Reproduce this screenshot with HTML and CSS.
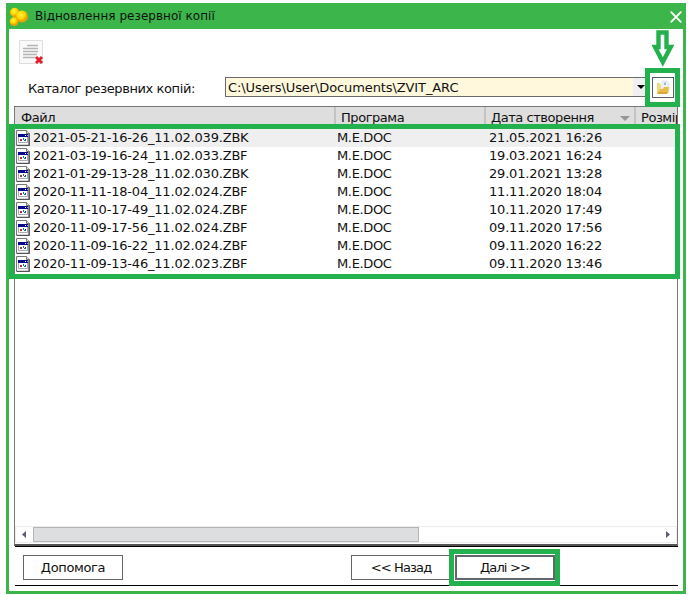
FILE: index.html
```html
<!DOCTYPE html>
<html lang="uk">
<head>
<meta charset="utf-8">
<title>Відновлення резервної копії</title>
<link rel="stylesheet" href="styles.css">
</head>
<body>
<svg width="0" height="0" class="defs">
  <symbol id="file" viewBox="0 0 14 16">
    <path d="M.5.5h10l3 3v12H.5z" fill="#fff" stroke="#777"/>
    <path d="M13 3v12.5H1" fill="none" stroke="#555" stroke-width="1.3"/>
    <path d="M10.5.5v3h3" fill="#ddd" stroke="#777"/>
    <path d="M2.5 4.5h9v8h-9z" fill="#fff" stroke="#a9a9b5"/>
    <path d="M2 4h10v3H2z" fill="#08088c"/>
    <path d="M9 5h1v1H9zM11 5h.6v1H11z" fill="#fff"/>
    <path d="M4 9h2v2H4z" fill="#a33"/><path d="M7 8h1v2H7zM8 10h2v1H8z" fill="#087c80"/><path d="M9 9h1v1H9z" fill="#22a"/>
  </symbol>
</svg>
<main class="window">
  <header class="title">
    <svg class="logo" width="20" height="20" viewBox="0 0 20 20">
      <defs><radialGradient id="g" cx=".4" cy=".35"><stop offset="0" stop-color="#fff23a"/><stop offset=".65" stop-color="#ffd800"/><stop offset="1" stop-color="#eba500"/></radialGradient></defs>
      <circle cx="5.8" cy="5.6" r="4.8" fill="url(#g)"/><circle cx="5.2" cy="14.6" r="4.4" fill="url(#g)"/><circle cx="13" cy="9.5" r="6" fill="url(#g)"/>
    </svg>
    <h1>Відновлення резервної копії</h1>
    <svg class="close" width="12" height="12" viewBox="0 0 12 12"><path d="M.7.7l10.6 10.6M11.3.7L.7 11.3" stroke="#fff" stroke-width="1.9"/></svg>
  </header>
  <div class="toolbar">
    <svg width="25" height="25" viewBox="0 0 25 25">
      <path d="M.5.5h23v23H.5z" fill="#fafafa" stroke="#dedede"/>
      <path d="M8 5.5h11M4 8.5h15M4 11.5h15M4 14.5h14M4 17.5h12" stroke="#b5b5b7" stroke-width="1.7"/>
      <path d="M17 17l6 6M23 17l-6 6" stroke="#df202c" stroke-width="2.9"/>
    </svg>
  </div>
  <div class="path">
    <label>Каталог резервних копій:</label>
    <div class="combo"><span>C:\Users\User\Documents\ZVIT_ARC</span><i><svg width="8" height="4" viewBox="0 0 8 4"><path d="M0 0h8L4 4z"/></svg></i></div>
    <div class="browse"><svg width="14" height="15" viewBox="0 0 14 15"><path d="M6 1h5l2 2v9H6z" fill="#edf2f7" stroke="#d4dce4" stroke-width=".6"/><path d="M8 5V3l2-1v3" fill="#9db8d2"/><path d="M1 3h3l1 2v9H1z" fill="#f0d886"/><path d="M1 13l3-4h3l1-2h5l-1 6z" fill="#e9bd43"/><path d="M1 14h10l1-2H3z" fill="#d8a63c"/></svg></div>
  </div>
  <section class="list">
    <div class="head"><span>Файл</span><span>Програма</span><span class="date">Дата створення<svg width="10" height="5" viewBox="0 0 10 5"><path d="M0 0h10L5 5z" fill="#969696"/></svg></span><span>Розмір</span></div>
    <div class="rows">
      <div class="row"><svg><use href="#file"/></svg><span>2021-05-21-16-26_11.02.039.ZBK</span><span>M.E.DOC</span><span>21.05.2021 16:26</span></div>
      <div class="row"><svg><use href="#file"/></svg><span>2021-03-19-16-24_11.02.033.ZBF</span><span>M.E.DOC</span><span>19.03.2021 16:24</span></div>
      <div class="row"><svg><use href="#file"/></svg><span>2021-01-29-13-28_11.02.030.ZBK</span><span>M.E.DOC</span><span>29.01.2021 13:28</span></div>
      <div class="row"><svg><use href="#file"/></svg><span>2020-11-11-18-04_11.02.024.ZBF</span><span>M.E.DOC</span><span>11.11.2020 18:04</span></div>
      <div class="row"><svg><use href="#file"/></svg><span>2020-11-10-17-49_11.02.024.ZBF</span><span>M.E.DOC</span><span>10.11.2020 17:49</span></div>
      <div class="row"><svg><use href="#file"/></svg><span>2020-11-09-17-56_11.02.024.ZBF</span><span>M.E.DOC</span><span>09.11.2020 17:56</span></div>
      <div class="row"><svg><use href="#file"/></svg><span>2020-11-09-16-22_11.02.024.ZBF</span><span>M.E.DOC</span><span>09.11.2020 16:22</span></div>
      <div class="row"><svg><use href="#file"/></svg><span>2020-11-09-13-46_11.02.023.ZBF</span><span>M.E.DOC</span><span>09.11.2020 13:46</span></div>
    </div>
    <div class="scroll">
      <svg width="4" height="7" viewBox="0 0 4 7"><path d="M4 0v7L0 3.5z" fill="#5b5b74"/></svg>
      <div class="thumb"></div>
      <svg width="4" height="7" viewBox="0 0 4 7"><path d="M0 0v7l4-3.5z" fill="#5b5b74"/></svg>
    </div>
  </section>
  <footer class="actions">
    <button>Допомога</button>
    <button class="back">&lt;&lt; Назад</button>
    <button class="next">Далі &gt;&gt;</button>
  </footer>
</main>
<div class="mark mark-list"></div>
<div class="mark mark-browse"></div>
<div class="mark mark-next"></div>
<svg class="arrow" width="22" height="37" viewBox="0 0 22 37"><path d="M6.5 2.5h8V17h4.2L10.8 32 3 17h3.5z" fill="#fff" stroke="#22b14c" stroke-width="4.4"/></svg>
</body>
</html>
```
FILE: styles.css
```css
* { box-sizing: border-box; }
body { margin: 0; padding: 3px 2px 0 6px; width: 688px; height: 595px; overflow: hidden; background: #fff; color: #111; font: 13px "DejaVu Sans", sans-serif; white-space: nowrap; }
.defs { position: absolute; }
svg { display: block; flex: none; }
.window { width: 680px; height: 591px; border: 3px solid #3cb54a; border-top: 0; background: #fff; display: flex; flex-direction: column; }
.title { height: 26px; margin: 0 -3px; flex: none; background: #3cb54a; display: flex; align-items: center; padding: 0 4px 0 3px; }
.title h1 { font-size: 12px; font-weight: 400; margin: 0 0 1px 6px; flex: 1; letter-spacing: .04px; }
.logo { margin-top: 2px; }
.close { margin-top: 2px; }
.toolbar { height: 48px; flex: none; padding: 11px 0 0 10px; }
.path { height: 29px; flex: none; display: flex; }
.path label { width: 216px; padding-left: 19px; line-height: 23px; letter-spacing: -.4px; }
.combo { width: 424px; height: 20px; border: 1px solid #6b6b6b; background: #fff8dc; display: flex; justify-content: space-between; line-height: 19px; padding-left: 2px; letter-spacing: -.1px; }
.combo i { width: 15px; background: #f0f0f2; display: flex; align-items: center; justify-content: center; }
.browse { width: 22px; height: 21px; margin-left: 3px; border: 1px solid #5c5c66; background: #fff; padding: 2px 0 0 3px; }
.list { width: 664px; height: 440px; flex: none; margin-left: 5px; border: 1px solid #777; border-bottom: 2px solid #555; display: flex; flex-direction: column; overflow: hidden; }
.head { display: grid; grid-template-columns: 321px 150px 150px 41px; height: 22px; background: #dedede; line-height: 22px; letter-spacing: -.45px; }
.head span { padding-left: 5px; border-right: 2px solid #c3c3c3; overflow: hidden; }
.head span:first-child { padding-left: 6px; }
.head span:last-child { border: 0; }
.head .date { display: flex; justify-content: space-between; align-items: center; padding-right: 4px; }
.rows { flex: 1; }
.row { display: grid; grid-template-columns: 18px 304px 152px 1fr; height: 18px; align-items: center; line-height: 18px; letter-spacing: -.19px; }
.row span:nth-child(3) { letter-spacing: -.35px; }
.row svg { width: 14px; height: 16px; margin-left: 1px; }
.row:first-child { background: #efeff0; }
.scroll { height: 17px; margin-bottom: 1px; border: 1px solid #ececec; display: flex; align-items: center; padding: 0 6px; }
.thumb { width: 386px; height: 15px; margin: 0 auto 0 7px; background: #dddee0; border: 1px solid #b5b5b8; }
.actions { width: 663px; height: 40px; margin-left: 6px; border-top: 1px solid #000; border-bottom: 1px solid #000; display: flex; padding: 8px 0 0 8px; }
button { width: 100px; height: 25px; padding: 0; border: 1px solid #65656d; background: #fff; color: #111; font: inherit; letter-spacing: -.35px; }
.back { margin-left: 228px; letter-spacing: -.85px; }
.next { margin-left: 4px; border: 2px solid #65656d; letter-spacing: -.85px; }
.mark { position: absolute; border: 5px solid #22b14c; }
.mark-list { left: 9px; top: 124px; width: 671px; height: 155px; }
.mark-browse { left: 645px; top: 68px; width: 35px; height: 39px; }
.mark-next { left: 449px; top: 549px; width: 111px; height: 37px; }
.arrow { position: absolute; left: 652px; top: 30px; }
```
